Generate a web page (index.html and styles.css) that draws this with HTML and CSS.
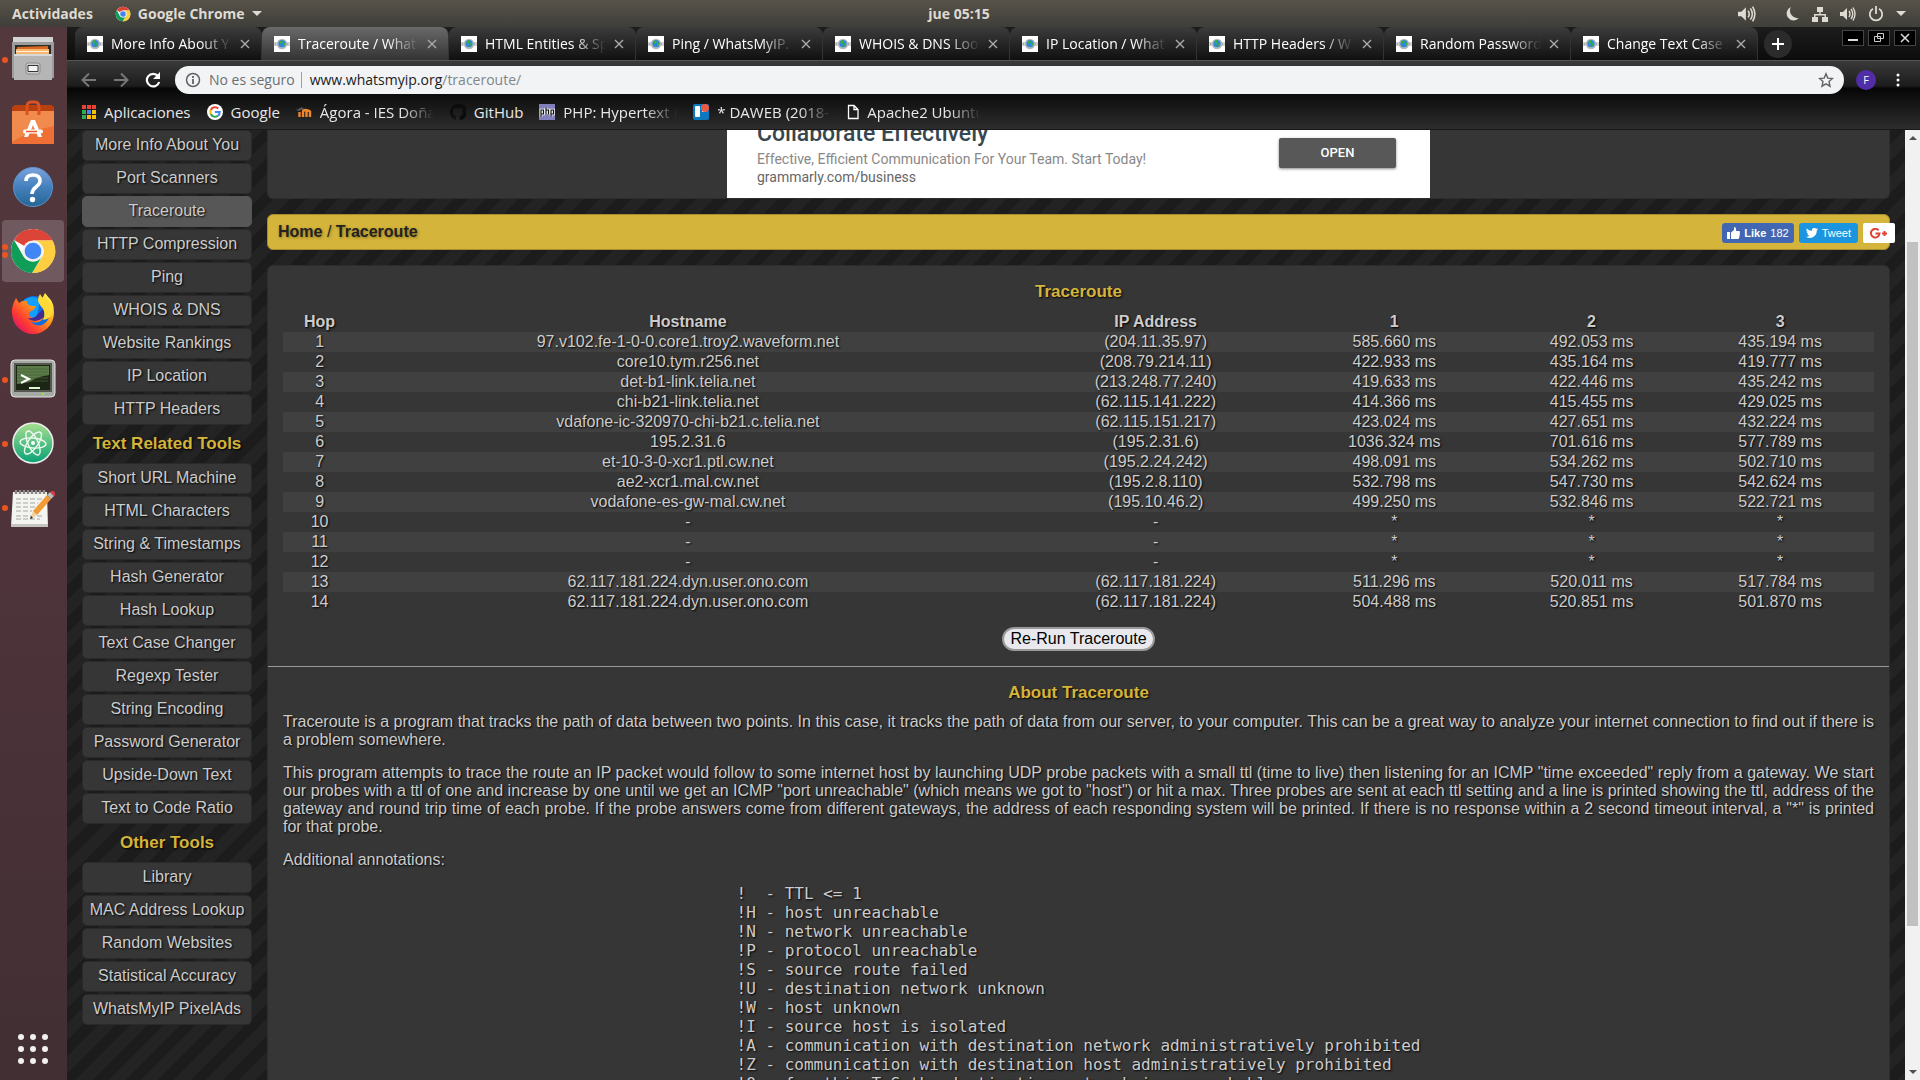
FILE: index.html
```html
<!DOCTYPE html>
<html lang="es">
<head>
<meta charset="utf-8">
<title>Traceroute / WhatsMyIP.org</title>
<link rel="stylesheet" href="styles.css">
</head>
<body>
<svg class="defs" aria-hidden="true">
  <defs>
    <symbol id="chrome" viewBox="0 0 48 48">
      <circle cx="24" cy="24" r="22" fill="#fff"/>
      <path d="M24 24 L5 13 A22 22 0 0 1 43.5 13.5 L24 13.5z" fill="#db4437"/>
      <path d="M43.6 13.5 A22 22 0 0 1 23 46 L33.500 29.500 A11 11 0 0 0 24 13.500z" fill="#ffcd40"/>
      <path d="M5 13 A22 22 0 0 0 23 46 L33 29.500 A11 11 0 0 1 14.500 29.500z" fill="#0f9d58"/>
      <circle cx="24" cy="24" r="10.500" fill="#f1f1f1"/>
      <circle cx="24" cy="24" r="8.300" fill="#4285f4"/>
    </symbol>
    <symbol id="globe" viewBox="0 0 16 16">
      <path d="M0 0h16v16H0z" fill="#fff"/>
      <path d="M0 6h16v4H0z" fill="#d2d2d2"/>
      <path d="M1 7h1v2H1zM13 7h1v2h-1z" fill="#a8a8a8"/>
      <circle cx="8" cy="8" r="5.200" fill="#b4b7bb"/>
      <circle cx="8" cy="7.700" r="3.600" fill="#2a86e0"/>
      <path d="M5.500 5.500l2-1.500 1.500 1.500-2 2.500-1.500-1zM9 7.500l2-1v2.500l-1.500 1.500zM6.500 9l1.500 1-.5 1z" fill="#3fae35"/>
    </symbol>
    <symbol id="speaker" viewBox="0 0 16 16">
      <path d="M0 6h3l4-4v12L3 10H0z" fill="currentColor"/>
      <path d="M9 5q2 3 0 6M11 3q3.500 5 0 10M13 1.500q4 6.500 0 13" fill="none" stroke="currentColor" stroke-width="1.400"/>
    </symbol>
    <symbol id="cross" viewBox="0 0 10 10"><path d="M1 1l8 8M9 1l-8 8" stroke="currentColor" stroke-width="1.400"/></symbol>
  </defs>
</svg>

<header class="topbar">
  <div class="topbar-left">
    <button class="top-item">Actividades</button>
    <button class="top-item"><svg width="16" height="16"><use href="#chrome"/></svg>Google Chrome<span class="caret"></span></button>
  </div>
  <button class="top-item">jue 05:15</button>
  <div class="tray">
    <svg class="tray-first" width="18" height="18"><use href="#speaker"/></svg>
    <svg width="14" height="15" viewBox="0 0 14 15"><path d="M5 1a7 7 0 1 0 8 11A7.500 7.500 0 0 1 5 1z" fill="currentColor"/></svg>
    <svg width="16" height="16" viewBox="0 0 16 16"><path d="M5 1h6v5H8.700v2H14v3h2v5h-6v-5h2.500V9.500h-9V11H6v5H0v-5h2V8h5.300V6H5z" fill="currentColor"/></svg>
    <svg width="16" height="16"><use href="#speaker"/></svg>
    <svg width="16" height="16" viewBox="0 0 16 16"><path d="M5 2.800A6.200 6.200 0 1 0 11 2.800M8 0v8" fill="none" stroke="currentColor" stroke-width="1.800"/></svg>
    <span class="caret"></span>
  </div>
</header>

<div class="desktop">
  <nav class="dock" aria-label="Dock">
    <a class="app running" href="#" aria-label="Archivos"><svg width="44" height="46" viewBox="0 0 44 46">
      <path d="M2 1h40v5H2z" fill="#d4d4d4"/><path d="M1 6h42v36H1z" fill="#9c9c9c"/><path d="M4 9h36v11H4z" fill="#2b2b2b"/>
      <path d="M6 11l31-1v8H6z" fill="#d8681f"/><path d="M5 13h33v6H5z" fill="#f7b56d"/><path d="M5 15h33v1H5z" fill="#fff2dd"/>
      <path d="M3 18h38v26H3z" fill="#b5b5b5"/><path d="M3 18h38v2H3z" fill="#d8d8d8"/><rect x="15" y="27" width="14" height="11" rx="2" fill="#ccc" stroke="#8b8b8b"/><path d="M17 29.500h10v6H17z" fill="#f3f3f3" stroke="#333"/></svg></a>
    <a class="app" href="#" aria-label="Software de Ubuntu"><svg width="44" height="46" viewBox="0 0 44 46">
      <path d="M1 7l3-2h36l3 2v4H1z" fill="#b9400f"/><path d="M1 11h42v33H1z" fill="#ee7034"/><path d="M1 11h42v15Q20 30 1 42z" fill="#f08b4d"/>
      <path d="M16 15V7q0-5 4-5h4q4 0 4 5v8" fill="none" stroke="#dd5120" stroke-width="3"/>
      <path d="M13 37l7-17h4l7 17h-4l-5-12-5 12z" fill="#fff"/><rect x="12" y="29.500" width="20" height="4" rx="2" fill="#fff"/><path d="M15 31.500h11" stroke="#e8582b" stroke-width="1.500"/></svg></a>
    <a class="app" href="#" aria-label="Ayuda"><svg width="42" height="42" viewBox="0 0 42 42">
      <defs><linearGradient id="help" x2="0" y2="1"><stop stop-color="#7da3dc"/><stop offset=".5" stop-color="#4480bd"/><stop offset="1" stop-color="#256594"/></linearGradient></defs>
      <circle cx="21" cy="21" r="19.500" fill="url(#help)" stroke="#5993cf"/><path d="M14 15q0-6 7-6t7 6q0 3-4 6t-4 7" fill="none" stroke="#fff" stroke-width="3.500"/><circle cx="20.500" cy="33.500" r="2.700" fill="#fff"/></svg></a>
    <a class="app active twice" href="#" aria-label="Google Chrome"><svg width="48" height="48"><use href="#chrome"/></svg></a>
    <a class="app" href="#" aria-label="Firefox"><svg width="46" height="46" viewBox="0 0 46 46">
      <defs><linearGradient id="fox" x1="1" x2="0" y1="0" y2="1"><stop offset=".1" stop-color="#fff44f"/><stop offset=".4" stop-color="#ff9a1c"/><stop offset=".7" stop-color="#ff3a32"/><stop offset="1" stop-color="#c60086"/></linearGradient></defs>
      <circle cx="24" cy="20" r="16" fill="#0a6fe0"/><path d="M14 8q9-6 16 0l-4 20H15z" fill="#12a0ff"/>
      <path d="M6 6l3 5q3-3 8-2-1 4 5 5l4 0q-2 5-7 6v4q6 4 9 0 7 1 4 4-6 5-12 1 9 9 17 0 5-7-2-13-6-6 0-15 3 4 5 6 4 4 4 14a21 21 0 0 1-42 0Q1 15 6 6z" fill="url(#fox)"/><path d="M17 26q8 6 16 0 4-5 1-10l-9 9q-4 2-8 1z" fill="#412c91"/>
      <path d="M30 2q-4 6 0 11 7 7 3 15 9-1 10-9 0-9-8-12-4-2-5-5z" fill="#ffd936"/></svg></a>
    <a class="app running" href="#" aria-label="Terminal"><svg width="46" height="42" viewBox="0 0 46 42">
      <rect x="1" y="2" width="44" height="37" rx="4" fill="#a6aaa4" stroke="#e2e2e0"/><path d="M4 5h38v29H4z" fill="#55584f"/><path d="M6 7h34v25H6z" fill="#1c2615"/><path d="M7 8h32v9Q25 19 20 24L7 26z" fill="#5d7d48"/><path d="M7 11h31M7 14h31M7 17h31M7 20h31M7 23h31" stroke="#45603b" stroke-width=".8"/>
      <path d="M11 17l8 4-8 4" fill="none" stroke="#fff" stroke-width="2"/><path d="M19 30h11" stroke="#dff7d5" stroke-width="2"/><path d="M32 36h2" stroke="#8ff02c" stroke-width="2"/></svg></a>
    <a class="app running" href="#" aria-label="Atom"><svg width="44" height="44" viewBox="0 0 44 44">
      <defs><linearGradient id="atom" x2="0" y2="1"><stop stop-color="#a8df90"/><stop offset="1" stop-color="#08a276"/></linearGradient></defs>
      <circle cx="22" cy="22" r="20" fill="url(#atom)" stroke="#eee" stroke-width="1.500"/><g fill="none" stroke="#eefaf1" stroke-width="1.400"><ellipse cx="22" cy="22" rx="13" ry="5" transform="rotate(5 22 22)"/><ellipse cx="22" cy="22" rx="13" ry="5" transform="rotate(65 22 22)"/><ellipse cx="22" cy="22" rx="13" ry="5" transform="rotate(125 22 22)"/></g><circle cx="22" cy="22" r="2" fill="#fff"/></svg></a>
    <a class="app running" href="#" aria-label="Editor de textos"><svg width="46" height="42" viewBox="0 0 46 42">
      <path d="M3 6h34l1 35H1z" fill="#f4f4f0"/><path d="M1 38h37v3H1z" fill="#c4c4c0"/><path d="M6 13h26M6 17h22M6 21h20M6 25h16M6 30h26M6 33h24" stroke="#a5a5a5" stroke-dasharray="5 2"/>
      <path d="M6 8V4M10 8V4M14 8V4M18 8V4M22 8V4M26 8V4M30 8V4M34 8V4" stroke="#888" stroke-width="2.400"/>
      <path d="M20 33l3-8 4 4z" fill="#f2d39c"/><path d="M20 33l1-3 2 2z" fill="#222"/><path d="M23 25L37 9l4 4-14 16z" fill="#f29a33"/><path d="M37 9l3-3 4 4-3 3z" fill="#bbb"/><path d="M40 6q3-2 4.500 0t0 4z" fill="#e33d43"/></svg></a>
    <a class="app grid" href="#" aria-label="Mostrar aplicaciones"><svg width="32" height="32" viewBox="0 0 32 32" fill="#f2f0f0"><circle cx="4" cy="4" r="3"/><circle cx="16" cy="4" r="3"/><circle cx="28" cy="4" r="3"/><circle cx="4" cy="16" r="3"/><circle cx="16" cy="16" r="3"/><circle cx="28" cy="16" r="3"/><circle cx="4" cy="28" r="3"/><circle cx="16" cy="28" r="3"/><circle cx="28" cy="28" r="3"/></svg></a>
  </nav>

  <div class="browser">
    <div class="tabstrip">
      <div class="tab"><svg width="16" height="16"><use href="#globe"/></svg><span>More Info About Y</span><svg class="x" width="10" height="10"><use href="#cross"/></svg></div>
      <div class="tab current"><svg width="16" height="16"><use href="#globe"/></svg><span>Traceroute / What</span><svg class="x" width="10" height="10"><use href="#cross"/></svg></div>
      <div class="tab"><svg width="16" height="16"><use href="#globe"/></svg><span>HTML Entities &amp; Sp</span><svg class="x" width="10" height="10"><use href="#cross"/></svg></div>
      <div class="tab"><svg width="16" height="16"><use href="#globe"/></svg><span>Ping / WhatsMyIP.</span><svg class="x" width="10" height="10"><use href="#cross"/></svg></div>
      <div class="tab"><svg width="16" height="16"><use href="#globe"/></svg><span>WHOIS &amp; DNS Loo</span><svg class="x" width="10" height="10"><use href="#cross"/></svg></div>
      <div class="tab"><svg width="16" height="16"><use href="#globe"/></svg><span>IP Location / What</span><svg class="x" width="10" height="10"><use href="#cross"/></svg></div>
      <div class="tab"><svg width="16" height="16"><use href="#globe"/></svg><span>HTTP Headers / W</span><svg class="x" width="10" height="10"><use href="#cross"/></svg></div>
      <div class="tab"><svg width="16" height="16"><use href="#globe"/></svg><span>Random Password</span><svg class="x" width="10" height="10"><use href="#cross"/></svg></div>
      <div class="tab"><svg width="16" height="16"><use href="#globe"/></svg><span>Change Text Case /</span><svg class="x" width="10" height="10"><use href="#cross"/></svg></div>
      <button class="newtab" aria-label="Nueva pestaña"><svg width="12" height="12" viewBox="0 0 12 12"><path d="M6 0v12M0 6h12" stroke="#fff" stroke-width="2"/></svg></button>
      <div class="winbuttons">
        <button aria-label="Minimizar"><svg width="12" height="12" viewBox="0 0 12 12"><path d="M1 8h10" stroke="#ddd" stroke-width="2"/></svg></button>
        <button aria-label="Restaurar"><svg width="12" height="12" viewBox="0 0 12 12"><path d="M4.500 1.500h6v5h-6zM1.500 4.500h6v5h-6z" fill="none" stroke="#ccc"/></svg></button>
        <button aria-label="Cerrar"><svg width="12" height="12" viewBox="0 0 12 12"><path d="M2 2l8 8M10 2l-8 8" stroke="#ddd" stroke-width="1.500"/></svg></button>
      </div>
    </div>

    <div class="toolbar">
      <button class="tool dim" aria-label="Atrás"><svg width="16" height="16" viewBox="0 0 16 16"><path d="M15 8H2M8 1.500L1.500 8 8 14.500" fill="none" stroke="currentColor" stroke-width="2"/></svg></button>
      <button class="tool dim" aria-label="Adelante"><svg width="16" height="16" viewBox="0 0 16 16"><path d="M1 8h13M8 1.500L14.500 8 8 14.500" fill="none" stroke="currentColor" stroke-width="2"/></svg></button>
      <button class="tool" aria-label="Recargar"><svg width="16" height="16" viewBox="0 0 16 16"><path d="M13 4A6.300 6.300 0 1 0 14.200 10" fill="none" stroke="currentColor" stroke-width="2.200"/><path d="M15 0v7H8z" fill="currentColor"/></svg></button>
      <div class="omnibox">
        <svg width="16" height="16" viewBox="0 0 16 16"><circle cx="8" cy="8" r="6.500" fill="none" stroke="#5f6368" stroke-width="1.500"/><path d="M8 7v5M8 4v2" stroke="#5f6368" stroke-width="1.800"/></svg>
        <span class="secure">No es seguro</span>
        <span class="url"><b>www.whatsmyip.org</b>/traceroute/</span>
        <svg width="16" height="16" viewBox="0 0 16 16"><path d="M8 1.800l1.800 4.300 4.700.4-3.500 3.100 1 4.600L8 11.800l-4 2.400 1-4.600L1.500 6.500l4.700-.4z" fill="none" stroke="#5f6368" stroke-width="1.400"/></svg>
      </div>
      <button class="avatar" aria-label="Perfil">F</button>
      <button class="menu" aria-label="Menú"><svg width="4" height="14" viewBox="0 0 4 14" fill="#fff"><circle cx="2" cy="2" r="1.500"/><circle cx="2" cy="7" r="1.500"/><circle cx="2" cy="12" r="1.500"/></svg></button>
    </div>

    <nav class="bookmarks" aria-label="Marcadores">
      <a href="#"><svg width="14" height="14" viewBox="0 0 14 14"><path d="M0 0h4v4H0zM5 0h4v4H5zM10 0h4v4h-4z" fill="#ea4335"/><path d="M0 5h4v4H0zM0 10h4v4H0z" fill="#34a853"/><path d="M5 5h4v4H5z" fill="#4285f4"/><path d="M10 5h4v4h-4zM5 10h4v4H5zM10 10h4v4h-4z" fill="#fbbc05"/></svg><span>Aplicaciones</span></a>
      <a href="#"><svg width="16" height="16" viewBox="0 0 16 16"><circle cx="8" cy="8" r="8" fill="#fff"/><g fill="none" stroke-width="2"><path d="M11.300 4.500A4.700 4.700 0 0 0 3.800 6" stroke="#ea4335"/><path d="M3.800 6a4.700 4.700 0 0 0 0 4" stroke="#fbbc05"/><path d="M3.800 10a4.700 4.700 0 0 0 7.200 1.700" stroke="#34a853"/><path d="M11 11.700A4.600 4.600 0 0 0 12.700 8H8" stroke="#4285f4"/></g></svg><span>Google</span></a>
      <a href="#"><svg width="16" height="16" viewBox="0 0 16 16"><path d="M0 6l6-3 2 2-5 2z" fill="#555"/><path d="M3.500 13V8M7 13V8q0-2 2.500-2T14 7.500V13M10.500 13V7" fill="none" stroke="#f0862a" stroke-width="2.400"/></svg><span class="fade">Ágora - IES Doña</span></a>
      <a href="#"><svg width="16" height="16" viewBox="0 0 16 16"><path d="M8 0a8 8 0 0 0-2.500 15.600c.4 0 .5-.2.500-.4v-1.500c-2 .5-2.700-.9-2.900-1.400-.3-.6-.6-.8-1-1 1 0 1.500.6 1.800 1 .6.900 1.500.7 2 .5.100-.5.300-.8.500-1-1.800-.2-3.600-.9-3.600-4 0-.9.300-1.600.8-2.200-.1-.2-.3-1 .1-2.100 0 0 .7-.2 2.200.8a7 7 0 0 1 4 0c1.500-1 2.200-.8 2.200-.8.400 1.100.2 1.900.1 2.100.5.600.8 1.300.8 2.200 0 3.100-1.900 3.800-3.600 4 .3.200.5.700.5 1.500v2.200c0 .200.100.5.500.400A8 8 0 0 0 8 0z" fill="#0c0c0c"/></svg><span>GitHub</span></a>
      <a href="#"><svg width="16" height="16" viewBox="0 0 16 16"><path d="M0 0h16v16H0z" fill="#8180bd"/><path d="M2 13V6h2.500v4H2M7 3v7M7 6h2.500v4M12 13V6h2.500v4H12" fill="none" stroke="#fff" stroke-width="2.600"/><path d="M2 13V6h2.500v4H2M7 3v7M7 6h2.500v4M12 13V6h2.500v4H12" fill="none" stroke="#111" stroke-width="1.200"/></svg><span class="fade">PHP: Hypertext P</span></a>
      <a href="#"><svg width="16" height="16" viewBox="0 0 16 16"><rect width="16" height="16" rx="2" fill="#0a79bf"/><rect x="2" y="2" width="5" height="11" rx="1" fill="#fff"/><path d="M9 2h4v6H9z" fill="#fff"/><circle cx="12" cy="4" r="4" fill="#eb5a46"/></svg><span class="fade">* DAWEB (2018-1</span></a>
      <a href="#"><svg width="12" height="16" viewBox="0 0 12 16"><path d="M1.500 1.500h5.500l4 4v9h-9.500zM7 1.500v4h4" fill="none" stroke="#fff" stroke-width="1.300"/></svg><span class="fade">Apache2 Ubuntu</span></a>
    </nav>

    <div class="viewport">
      <div class="page">
        <nav class="side">
          <a href="#">More Info About You</a><a href="#">Port Scanners</a><a class="here" href="#">Traceroute</a><a href="#">HTTP Compression</a><a href="#">Ping</a><a href="#">WHOIS &amp; DNS</a><a href="#">Website Rankings</a><a href="#">IP Location</a><a href="#">HTTP Headers</a>
          <h2>Text Related Tools</h2>
          <a href="#">Short URL Machine</a><a href="#">HTML Characters</a><a href="#">String &amp; Timestamps</a><a href="#">Hash Generator</a><a href="#">Hash Lookup</a><a href="#">Text Case Changer</a><a href="#">Regexp Tester</a><a href="#">String Encoding</a><a href="#">Password Generator</a><a href="#">Upside-Down Text</a><a href="#">Text to Code Ratio</a>
          <h2>Other Tools</h2>
          <a href="#">Library</a><a href="#">MAC Address Lookup</a><a href="#">Random Websites</a><a href="#">Statistical Accuracy</a><a href="#">WhatsMyIP PixelAds</a>
        </nav>
        <main>
          <section class="panel adbox">
            <div class="ad">
              <div class="adtext"><strong>Collaborate Effectively</strong><span>Effective, Efficient Communication For Your Team. Start Today!</span><a href="#">grammarly.com/business</a></div>
              <button>OPEN</button>
            </div>
          </section>
          <div class="crumbs">
            <div class="trail"><a href="#">Home</a> / <b>Traceroute</b></div>
            <div class="social">
              <button class="like"><svg width="13" height="12" viewBox="0 0 13 12" fill="#fff"><path d="M0 5h3v7H0zM4 5.500L7 3V0q2.500 0 2 4h3.500q1 1-.5 7.500l-1 .5H4z"/></svg><b>Like</b> 182</button>
              <button class="tweet"><svg width="12" height="10" viewBox="0 0 24 20" fill="#fff"><path d="M24 2.400a10 10 0 0 1-2.800.8A5 5 0 0 0 23.300.5a10 10 0 0 1-3.100 1.200 4.900 4.900 0 0 0-8.400 4.500A14 14 0 0 1 1.700 1a4.900 4.900 0 0 0 1.500 6.600 5 5 0 0 1-2.200-.6 4.900 4.900 0 0 0 3.900 4.900 5 5 0 0 1-2.200 0 4.900 4.900 0 0 0 4.600 3.500A10 10 0 0 1 0 17.500 14 14 0 0 0 21.500 5 10 10 0 0 0 24 2.400z"/></svg>Tweet</button>
              <button class="plus" aria-label="Google+"><svg width="18" height="11" viewBox="0 0 18 11" fill="none" stroke="#db4437" stroke-width="2"><path d="M8.500 2.400A4.300 4.300 0 1 0 9.500 5.500H5.500M14.500 3v5M12 5.500h5"/></svg></button>
            </div>
          </div>
          <section class="panel content">
            <h2>Traceroute</h2>
            <table>
              <colgroup><col class="c-hop"><col class="c-host"><col class="c-ip"><col class="c-one"><col class="c-two"><col class="c-three"></colgroup>
              <thead><tr><th>Hop</th><th>Hostname</th><th>IP Address</th><th>1</th><th>2</th><th>3</th></tr></thead>
              <tbody>
                <tr><td>1</td><td>97.v102.fe-1-0-0.core1.troy2.waveform.net</td><td>(204.11.35.97)</td><td>585.660 ms</td><td>492.053 ms</td><td>435.194 ms</td></tr>
                <tr><td>2</td><td>core10.tym.r256.net</td><td>(208.79.214.11)</td><td>422.933 ms</td><td>435.164 ms</td><td>419.777 ms</td></tr>
                <tr><td>3</td><td>det-b1-link.telia.net</td><td>(213.248.77.240)</td><td>419.633 ms</td><td>422.446 ms</td><td>435.242 ms</td></tr>
                <tr><td>4</td><td>chi-b21-link.telia.net</td><td>(62.115.141.222)</td><td>414.366 ms</td><td>415.455 ms</td><td>429.025 ms</td></tr>
                <tr><td>5</td><td>vdafone-ic-320970-chi-b21.c.telia.net</td><td>(62.115.151.217)</td><td>423.024 ms</td><td>427.651 ms</td><td>432.224 ms</td></tr>
                <tr><td>6</td><td>195.2.31.6</td><td>(195.2.31.6)</td><td>1036.324 ms</td><td>701.616 ms</td><td>577.789 ms</td></tr>
                <tr><td>7</td><td>et-10-3-0-xcr1.ptl.cw.net</td><td>(195.2.24.242)</td><td>498.091 ms</td><td>534.262 ms</td><td>502.710 ms</td></tr>
                <tr><td>8</td><td>ae2-xcr1.mal.cw.net</td><td>(195.2.8.110)</td><td>532.798 ms</td><td>547.730 ms</td><td>542.624 ms</td></tr>
                <tr><td>9</td><td>vodafone-es-gw-mal.cw.net</td><td>(195.10.46.2)</td><td>499.250 ms</td><td>532.846 ms</td><td>522.721 ms</td></tr>
                <tr><td>10</td><td>-</td><td>-</td><td>*</td><td>*</td><td>*</td></tr>
                <tr><td>11</td><td>-</td><td>-</td><td>*</td><td>*</td><td>*</td></tr>
                <tr><td>12</td><td>-</td><td>-</td><td>*</td><td>*</td><td>*</td></tr>
                <tr><td>13</td><td>62.117.181.224.dyn.user.ono.com</td><td>(62.117.181.224)</td><td>511.296 ms</td><td>520.011 ms</td><td>517.784 ms</td></tr>
                <tr><td>14</td><td>62.117.181.224.dyn.user.ono.com</td><td>(62.117.181.224)</td><td>504.488 ms</td><td>520.851 ms</td><td>501.870 ms</td></tr>
              </tbody>
            </table>
            <button class="rerun">Re-Run Traceroute</button>
            <hr>
            <h2>About Traceroute</h2>
            <p>Traceroute is a program that tracks the path of data between two points. In this case, it tracks the path of data from our server, to your computer. This can be a great way to analyze your internet connection to find out if there is a problem somewhere.</p>
            <p>This program attempts to trace the route an IP packet would follow to some internet host by launching UDP probe packets with a small ttl (time to live) then listening for an ICMP "time exceeded" reply from a gateway. We start our probes with a ttl of one and increase by one until we get an ICMP "port unreachable" (which means we got to "host") or hit a max. Three probes are sent at each ttl setting and a line is printed showing the ttl, address of the gateway and round trip time of each probe. If the probe answers come from different gateways, the address of each responding system will be printed. If there is no response within a 2 second timeout interval, a "*" is printed for that probe.</p>
            <p>Additional annotations:</p>
            <pre>!  - TTL &lt;= 1
!H - host unreachable
!N - network unreachable
!P - protocol unreachable
!S - source route failed
!U - destination network unknown
!W - host unknown
!I - source host is isolated
!A - communication with destination network administratively prohibited
!Z - communication with destination host administratively prohibited
!Q - for this ToS the destination network is unreachable</pre>
          </section>
        </main>
      </div>
      <div class="scrollbar" aria-hidden="true"><span class="up"></span><span class="thumb"></span><span class="down"></span></div>
    </div>
  </div>
</div>
</body>
</html>
```
FILE: styles.css
```css
* { box-sizing: border-box; }
body {
  margin: 0;
  height: 100vh;
  overflow: hidden;
  display: flex;
  flex-direction: column;
  font-family: "Liberation Sans", Arial, sans-serif;
  font-size: 16px;
}
button { font: inherit; border: 0; padding: 0; background: none; color: inherit; }
a { color: inherit; text-decoration: none; }
svg { display: block; flex: none; }
.defs { position: absolute; width: 0; height: 0; }

/* Desktop bar */
.topbar {
  flex: none;
  height: 27px;
  display: grid;
  grid-template-columns: 1fr auto 1fr;
  align-items: center;
  padding: 0 14px 0 12px;
  background: linear-gradient(#57534a, #3f3e39);
  color: #dfdbd2;
  font: bold 14px "Open Sans", "Noto Sans", sans-serif;
  text-shadow: 0 1px 1px #222;
}
.topbar-left { display: flex; gap: 22px; }
.top-item { display: flex; align-items: center; gap: 7px; }
.caret { border: 5px solid transparent; border-top-color: currentColor; border-bottom: 0; }
.tray { display: flex; align-items: center; justify-content: flex-end; gap: 12px; }
.tray-first { margin-right: 18px; }

.desktop { flex: 1; min-height: 0; display: flex; }

/* Dock */
.dock {
  flex: none;
  width: 67px;
  display: flex;
  flex-direction: column;
  gap: 2px;
  padding-top: 1px;
  background: linear-gradient(#53383d, #4e333b 50%, #412f33);
}
.app {
  position: relative;
  height: 62px;
  margin: 0 3px 0 2px;
  display: flex;
  align-items: center;
  justify-content: center;
  border-radius: 4px;
}
.app.active { background: #70595f; }
.app.running::before, .app.twice::before, .app.twice::after {
  content: "";
  position: absolute;
  left: 0;
  top: 29px;
  width: 6px;
  height: 6px;
  border-radius: 50%;
  background: #e95420;
}
.app.twice::before { top: 24px; }
.app.twice::after { top: 32px; }
.app.grid { margin-top: auto; }

/* Browser frame */
.browser { flex: 1; min-width: 0; display: flex; flex-direction: column; background: #1a1a1a; color: #fff; font-family: "Open Sans", "Noto Sans", sans-serif; font-size: 14px; }
.tabstrip { flex: none; height: 33px; display: flex; padding: 0 4px 0 8px; background: linear-gradient(#1c1c1c, #0c0c0c); }
.tab {
  flex: 0 1 187px;
  min-width: 0;
  display: flex;
  align-items: center;
  gap: 8px;
  padding: 0 11px 0 12px;
  border-radius: 8px 8px 0 0;
  background: linear-gradient(#3c3c3c, #101010);
  border-right: 1px solid #333;
}
.tab.current { background: linear-gradient(#6a6a6a, #333); }
.tab span, .fade {
  overflow: hidden;
  white-space: nowrap;
  -webkit-mask-image: linear-gradient(90deg, #000 calc(100% - 32px), transparent);
  mask-image: linear-gradient(90deg, #000 calc(100% - 32px), transparent);
}
.tab span { flex: 1; }
.tab .x { color: #aaa; }
.newtab { width: 28px; height: 28px; margin: 3px auto 0 6px; border-radius: 50%; background: #2b2b2b; display: grid; place-items: center; }
.winbuttons { display: flex; gap: 4px; padding-top: 3px; }
.winbuttons button { width: 22px; height: 16px; display: grid; place-items: center; background: #000; border: 1px solid #444; }

.toolbar {
  flex: none;
  height: 34px;
  display: flex;
  align-items: center;
  gap: 16px;
  padding: 4px 20px 0 14px;
  border-top: 1px solid #555;
  background: linear-gradient(#3a3a3a, #1c1c1c 75%, #050505 84%, #0c0c0c);
}
.tool { width: 16px; }
.dim { color: #777; }
.omnibox {
  flex: 1;
  height: 28px;
  display: flex;
  align-items: center;
  gap: 8px;
  margin-left: -2px;
  padding: 0 10px;
  border-radius: 14px;
  background: #f1f3f4;
  color: #80868b;
}
.secure { color: #6b6f74; padding-right: 6px; border-right: 1px solid #9aa0a6; line-height: 16px; }
.url { flex: 1; }
.url b { font-weight: 400; color: #202124; }
.avatar { width: 20px; height: 20px; margin-left: -4px; border-radius: 50%; background: #512da8; font-size: 11px; }
.menu { margin-left: 4px; }

.bookmarks {
  flex: none;
  height: 36px;
  display: flex;
  align-items: center;
  gap: 16px;
  padding: 0 15px;
  background: linear-gradient(#0c0c0c, #2d2d2d);
  border-bottom: 1px solid #181818;
  color: #e8e8e8;
  font-size: 15px;
}
.bookmarks a { display: flex; align-items: center; gap: 8px; white-space: nowrap; }
.fade { width: 114px; }

/* Web page */
.viewport {
  flex: 1;
  min-height: 0;
  display: flex;
  background: repeating-linear-gradient(135deg, #1c1c1c 0 11px, #232323 11px 23px);
  color: #ccc;
  font-family: "Liberation Sans", Arial, sans-serif;
  font-size: 16px;
  line-height: 18px;
  text-shadow: 1px 1px 2px #000;
}
.page { flex: 1; min-width: 0; display: flex; gap: 15px; padding: 0 15px; overflow: hidden; }
.side { flex: none; width: 170px; display: flex; flex-direction: column; gap: 2px; }
.side a {
  flex: none;
  height: 31px;
  border: 1px solid #2a2a2a;
  border-radius: 5px;
  background: #363636;
  text-align: center;
  line-height: 28px;
}
.side a.here { background: #575757; border-color: #555; }
h2 { margin: 0; color: #d4b43a; font-size: 17px; line-height: 20px; text-align: center; }
.side h2 { padding: 7px 0; }
main { flex: 1; min-width: 0; display: flex; flex-direction: column; gap: 15px; }
.panel { flex: none; border: 1px solid #2d2d2d; border-radius: 6px; background: #363636; }
.adbox { height: 69px; border-top: 0; border-radius: 0 0 6px 6px; display: flex; justify-content: center; }
.ad {
  width: 703px;
  height: 68px;
  display: flex;
  justify-content: space-between;
  padding: 0 34px 0 30px;
  overflow: hidden;
  background: #fff;
  font-family: Roboto, sans-serif;
  text-shadow: none;
}
.adtext { display: flex; flex-direction: column; margin-top: -12px; font-size: 14px; color: #888; }
.adtext strong { font-size: 23px; font-weight: 500; line-height: 32px; color: #37474f; }
.adtext a { color: #666; }
.ad button { width: 117px; height: 30px; margin-top: 8px; border-radius: 2px; background: #585858; box-shadow: 0 1px 3px #888; color: #fff; font-size: 13px; font-weight: 500; }

.crumbs {
  flex: none;
  height: 36px;
  display: flex;
  justify-content: space-between;
  padding: 0 0 0 10px;
  border: 1px solid #a68d2b;
  border-radius: 6px;
  background: #d4b43a;
  color: #222;
  text-shadow: 1px 1px 3px #8a7420;
}
.trail { line-height: 34px; }
.trail a { font-weight: bold; }
.social { display: flex; align-items: flex-start; gap: 5px; margin: 8px -6px 0 0; font-size: 11px; text-shadow: none; color: #fff; }
.social button { height: 20px; display: flex; align-items: center; gap: 4px; padding: 0 5px; border-radius: 3px; white-space: nowrap; }
.like { background: #4267b2; }
.social .tweet { background: #1b95e0; padding: 0 7px; }
.social .plus { background: #fff; width: 32px; justify-content: center; border-radius: 2px; }

.content { padding: 16px 15px 0; }
table { width: 100%; margin: 10px 0 15px; border-collapse: collapse; table-layout: fixed; text-align: center; }
.c-hop { width: 4.6%; }
.c-host { width: 41.7%; }
.c-ip { width: 17.1%; }
.c-one { width: 12.9%; }
.c-two { width: 11.9%; }
.c-three { width: 11.8%; }
th, td { height: 20px; padding: 0; }
tbody tr:nth-child(odd) { background: #404040; }
.rerun {
  display: block;
  margin: 0 auto;
  height: 24px;
  padding: 0 6px;
  border: 2px solid #999;
  border-radius: 12px;
  background: #e9e9ed;
  color: #000;
  line-height: 18px;
}
hr { margin: 15px -15px 16px; border: 0; height: 1px; background: #999; }
p { margin: 0 0 15px; text-align: justify; }
h2 + p { margin-top: 10px; }
pre { width: max-content; margin: 0 auto; font: 16px/19px "DejaVu Sans Mono", monospace; }

.scrollbar { flex: none; width: 15px; display: flex; flex-direction: column; align-items: center; background: #f1f1f1; }
.up { margin-top: 6px; border: 4px solid transparent; border-top: 0; border-bottom-color: #505050; }
.thumb { width: 11px; height: 72%; margin-top: 102px; background: #c1c1c1; }
.down { margin: auto 0 6px; border: 4px solid transparent; border-bottom: 0; border-top-color: #505050; }
```
